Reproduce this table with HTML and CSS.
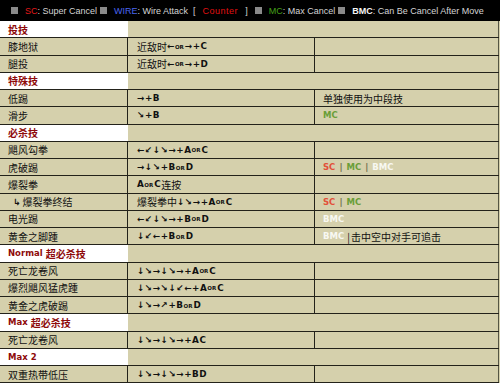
FILE: index.html
```html
<!DOCTYPE html>
<html lang="zh-CN">
<head>
  <meta charset="UTF-8" />
  <meta name="viewport" content="width=device-width, initial-scale=1.0"/>
  <title>出招表</title>
  <link rel="stylesheet" href="styles.css">
</head>
<body>
  <!-- legend -->
  <div class="legend">
    <span class="item"><span class="key"></span><b class="c-sc">SC</b>: Super Cancel</span>
    <span class="item"><span class="key"></span><b class="c-wire">WIRE</b>: Wire Attack</span>
    <span class="item counter"><span class="brk">[</span><span class="c-counter">Counter</span><span class="brk">]</span></span>
    <span class="item"><span class="key"></span><b class="c-mc">MC</b>: Max Cancel</span>
    <span class="item"><span class="key"></span><b class="c-bmc">BMC</b>: Can Be Cancel After Move</span>
  </div>

  <div class="moves">
    <!-- 投技 -->
    <div class="sec">投技</div><div class="sec-fill"></div>
    <div class="name">膝地狱</div><div class="cmd">近敌时<i>←</i><small>OR</small><i>→</i><i>+</i><i>C</i></div><div class="note"></div>
    <div class="name">腿投</div><div class="cmd">近敌时<i>←</i><small>OR</small><i>→</i><i>+</i><i>D</i></div><div class="note"></div>

    <!-- 特殊技 -->
    <div class="sec">特殊技</div><div class="sec-fill"></div>
    <div class="name">低踢</div><div class="cmd"><i>→</i><i>+</i><i>B</i></div><div class="note">单独使用为中段技</div>
    <div class="name">滑步</div><div class="cmd"><i>↘</i><i>+</i><i>B</i></div><div class="note"><b class="mc">MC</b></div>

    <!-- 必杀技 -->
    <div class="sec">必杀技</div><div class="sec-fill"></div>
    <div class="name">飓风勾拳</div><div class="cmd"><i>←↙↓↘→</i><i>+</i><i>A</i><small>OR</small><i>C</i></div><div class="note"></div>
    <div class="name">虎破踢</div><div class="cmd"><i>→↓↘</i><i>+</i><i>B</i><small>OR</small><i>D</i></div><div class="note"><b class="sc">SC</b><b class="bar">|</b><b class="mc">MC</b><b class="bar">|</b><b class="bmc">BMC</b></div>
    <div class="name">爆裂拳</div><div class="cmd"><i>A</i><small>OR</small><i>C</i>连按</div><div class="note"></div>
    <div class="name sub"><i>↳</i>爆裂拳终结</div><div class="cmd">爆裂拳中<i>↓↘→</i><i>+</i><i>A</i><small>OR</small><i>C</i></div><div class="note"><b class="sc">SC</b><b class="bar">|</b><b class="mc">MC</b></div>
    <div class="name">电光踢</div><div class="cmd"><i>←↙↓↘→</i><i>+</i><i>B</i><small>OR</small><i>D</i></div><div class="note"><b class="bmc">BMC</b></div>
    <div class="name">黄金之脚踵</div><div class="cmd"><i>↓↙←</i><i>+</i><i>B</i><small>OR</small><i>D</i></div><div class="note"><b class="bmc">BMC</b><span class="pipe">|</span>击中空中对手可追击</div>

    <!-- 超必杀技 -->
    <div class="sec"><span class="latin">Normal</span> 超必杀技</div><div class="sec-fill"></div>
    <div class="name">死亡龙卷风</div><div class="cmd"><i>↓↘→↓↘→</i><i>+</i><i>A</i><small>OR</small><i>C</i></div><div class="note"></div>
    <div class="name">爆烈飓风猛虎踵</div><div class="cmd"><i>↓↘→↘↓↙←</i><i>+</i><i>A</i><small>OR</small><i>C</i></div><div class="note"></div>
    <div class="name">黄金之虎破踢</div><div class="cmd"><i>↓↘→↗</i><i>+</i><i>B</i><small>OR</small><i>D</i></div><div class="note"></div>

    <div class="sec"><span class="latin">Max</span> 超必杀技</div><div class="sec-fill"></div>
    <div class="name">死亡龙卷风</div><div class="cmd"><i>↓↘→↓↘→</i><i>+</i><i>AC</i></div><div class="note"></div>

    <div class="sec"><span class="latin">Max 2</span></div><div class="sec-fill"></div>
    <div class="name">双重热带低压</div><div class="cmd"><i>↓↘→↓↘→</i><i>+</i><i>BD</i></div><div class="note"></div>
  </div>
</body>
</html>
```

FILE: styles.css
```css
body {
  margin: 0;
  padding: 0;
  background: #d5d0ac;
  font-family: "Noto Sans CJK SC", "Liberation Sans", sans-serif;
  font-size: 10px;
  color: #111;
  overflow: hidden;
}

/* legend bar */
.legend {
  height: 21px;
  background: #000;
  color: #d4d4d4;
  font-family: "Liberation Sans", Arial, sans-serif;
  font-size: 9px;
  display: flex;
  align-items: center;
  padding-left: 11px;
}

.item {
  white-space: nowrap;
  margin-right: 3px;
}

.legend b {
  font-weight: normal;
}

.key {
  display: inline-block;
  width: 7px;
  height: 7px;
  background: #8a8a8a;
  margin-right: 7px;
  vertical-align: -0.5px;
}

.counter {
  margin: 0 7px 0 2px;
}

.c-sc { color: #e01818; }
.c-wire { color: #4a66ee; }
.c-counter { color: #e01010; margin: 0 7px; letter-spacing: 0.5px; }
.c-mc { color: #44a018; }
.legend .c-bmc { color: #f4f4f4; font-weight: bold; }
.brk { color: #d4d4d4; }

/* move list */
.moves {
  width: 499px;
  display: grid;
  grid-template-columns: 128px 187px 184px;
  grid-auto-rows: 17.25px;
  border-right: 1px solid #555542;
  box-sizing: border-box;
}

.moves > div {
  box-sizing: border-box;
  border-bottom: 1px solid #23221a;
  display: flex;
  align-items: center;
  white-space: nowrap;
  overflow: hidden;
}

.name {
  padding-left: 8px;
  border-right: 1px solid #23221a;
}

.name.sub {
  padding-left: 13px;
}

.name.sub i {
  font-style: normal;
  font-weight: bold;
  font-family: "DejaVu Sans", sans-serif;
  font-size: 9px;
  margin-right: 2px;
}

.cmd {
  padding-left: 9px;
  border-right: 1px solid #23221a;
}

.cmd i {
  font-style: normal;
  font-weight: bold;
  font-family: "DejaVu Sans", sans-serif;
  font-size: 8.8px;
  letter-spacing: 0.5px;
}

.cmd small {
  font-family: "DejaVu Sans", sans-serif;
  font-weight: bold;
  font-size: 5.5px;
  margin: 1px 1px 0 0;
}

.note {
  padding-left: 8px;
}

.note b {
  font-family: "DejaVu Sans", sans-serif;
  font-size: 8.5px;
}

.note .sc { color: #e2503a; }
.note .mc { color: #6a9e38; }
.note .bmc { color: #f8f8f2; }
.note .bar { color: #6f6e4c; margin: 0 4px; }
.note .pipe { color: #111; margin: 0 1px 0 3px; }

/* section header rows */
.sec {
  background: #fff;
  color: #8e0a0a;
  font-weight: bold;
  padding-left: 8px;
}

.sec .latin {
  font-family: "DejaVu Sans", sans-serif;
  font-size: 8.5px;
  margin-right: 3px;
}

.sec-fill {
  grid-column: span 2;
}
```
